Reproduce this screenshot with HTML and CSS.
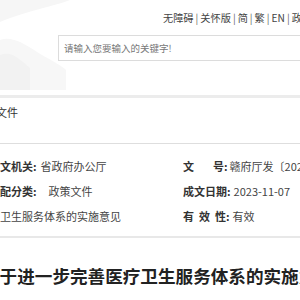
FILE: index.html
```html
<!DOCTYPE html>
<html lang="zh-CN">
<head>
<meta charset="utf-8">
<title>省政府办公厅 政策文件</title>
<link rel="stylesheet" href="styles.css">
</head>
<body>
<div class="page">
  <header class="header">
    <svg class="bg" width="120" height="95" viewBox="0 0 120 95" aria-hidden="true">
      <path d="M0 0 H70 C55 6 30 10 0 22 Z" fill="#f6f6f6"/>
      <path d="M0 40 C10 36 22 42 34 50 C46 58 60 64 66 70 L66 90 L0 90 Z" fill="#f7f7f7"/>
      <path d="M0 55 C12 50 20 60 30 68 L30 90 L0 90 Z" fill="#f2f2f2"/>
    </svg>
    <nav class="links">无障碍<span class="sep">|</span>关怀版<span class="sep">|</span>简<span class="sep">|</span>繁<span class="sep">|</span>EN<span class="sep">|</span>政务服务</nav>
    <div class="search"><span class="ph">请输入您要输入的关键字!</span></div>
  </header>
  <div class="band"></div>
  <div class="crumb"><span class="crumb-text">首页 &gt; 政府信息公开 &gt; 文件</span></div>
  <div class="info">
    <div class="cell left"><b class="lab">发文机关:</b><span class="val v1">省政府办公厅</span></div>
    <div class="cell right"><b class="lab">文<span class="gap"></span>号:</b><span class="val v4">赣府厅发〔2023〕37号</span></div>
    <div class="cell left"><b class="lab">组配分类:</b><span class="val v2">政策文件</span></div>
    <div class="cell right"><b class="lab">成文日期:</b><span class="val v5">2023-11-07</span></div>
    <div class="cell left"><span class="val v3">关于进一步完善医疗卫生服务体系的实施意见</span></div>
    <div class="cell right"><b class="lab">有<span class="gap2"></span>效<span class="gap2"></span>性:</b><span class="val v5">有效</span></div>
  </div>
  <h1 class="title">关于进一步完善医疗卫生服务体系的实施意见</h1>
</div>
</body>
</html>
```

FILE: styles.css
```css
html, body {
  margin: 0;
  padding: 0;
  background: #fff;
}
body {
  width: 300px;
  height: 300px;
  overflow: hidden;
  font-family: "Microsoft YaHei", "Noto Sans CJK SC", "Noto Sans", sans-serif;
  color: #333;
}
.page {
  width: 300px;
  overflow: hidden;
}
.header {
  position: relative;
  height: 95px;
}
.bg {
  position: absolute;
  left: 0;
  top: 0;
  z-index: 0;
}
.links {
  position: relative;
  padding-top: 11px;
  margin-left: 163px;
  font-size: 10.2px;
  line-height: 14px;
  white-space: nowrap;
  color: #444;
}
.sep {
  margin: 0 2px;
  color: #666;
}
.search {
  position: relative;
  margin-top: 10px;
  margin-left: 58px;
  width: 400px;
  height: 24px;
  border: 1px solid #dcdcdc;
  background: #fff;
  box-sizing: content-box;
}
.ph {
  display: block;
  padding-left: 5px;
  font-size: 9.5px;
  line-height: 24px;
  color: #777;
  white-space: nowrap;
}
.band {
  height: 3px;
  background: #ececec;
}
.crumb {
  height: 45px;
  width: 300px;
  border-bottom: 1px solid #dedede;
  white-space: nowrap;
  overflow: hidden;
}
.crumb-text {
  display: block;
  margin-top: 6px;
  margin-left: -114px;
  font-size: 11px;
  line-height: 16px;
  color: #333;
}
.info {
  display: grid;
  grid-template-columns: 183px 117px;
  padding-top: 10px;
  padding-bottom: 7px;
  border-bottom: 2px solid #e8e8e8;
  font-size: 11px;
  line-height: 25px;
}
.cell {
  white-space: nowrap;
  overflow: hidden;
}
.left .lab {
  margin-left: -11px;
}
.lab {
  font-weight: bold;
  color: #333;
}
.val {
  color: #444;
}
.v1 { margin-left: 4px; }
.v2 { margin-left: 12px; }
.v3 { margin-left: -99px; }
.v4 { margin-left: 2px; }
.v5 { margin-left: 3px; }
.gap {
  display: inline-block;
  width: 19px;
}
.gap2 {
  display: inline-block;
  width: 5px;
}
.title {
  margin: 26px 0 0 -18px;
  font-size: 17.6px;
  line-height: 24px;
  font-weight: bold;
  color: #222;
  white-space: nowrap;
}
```
